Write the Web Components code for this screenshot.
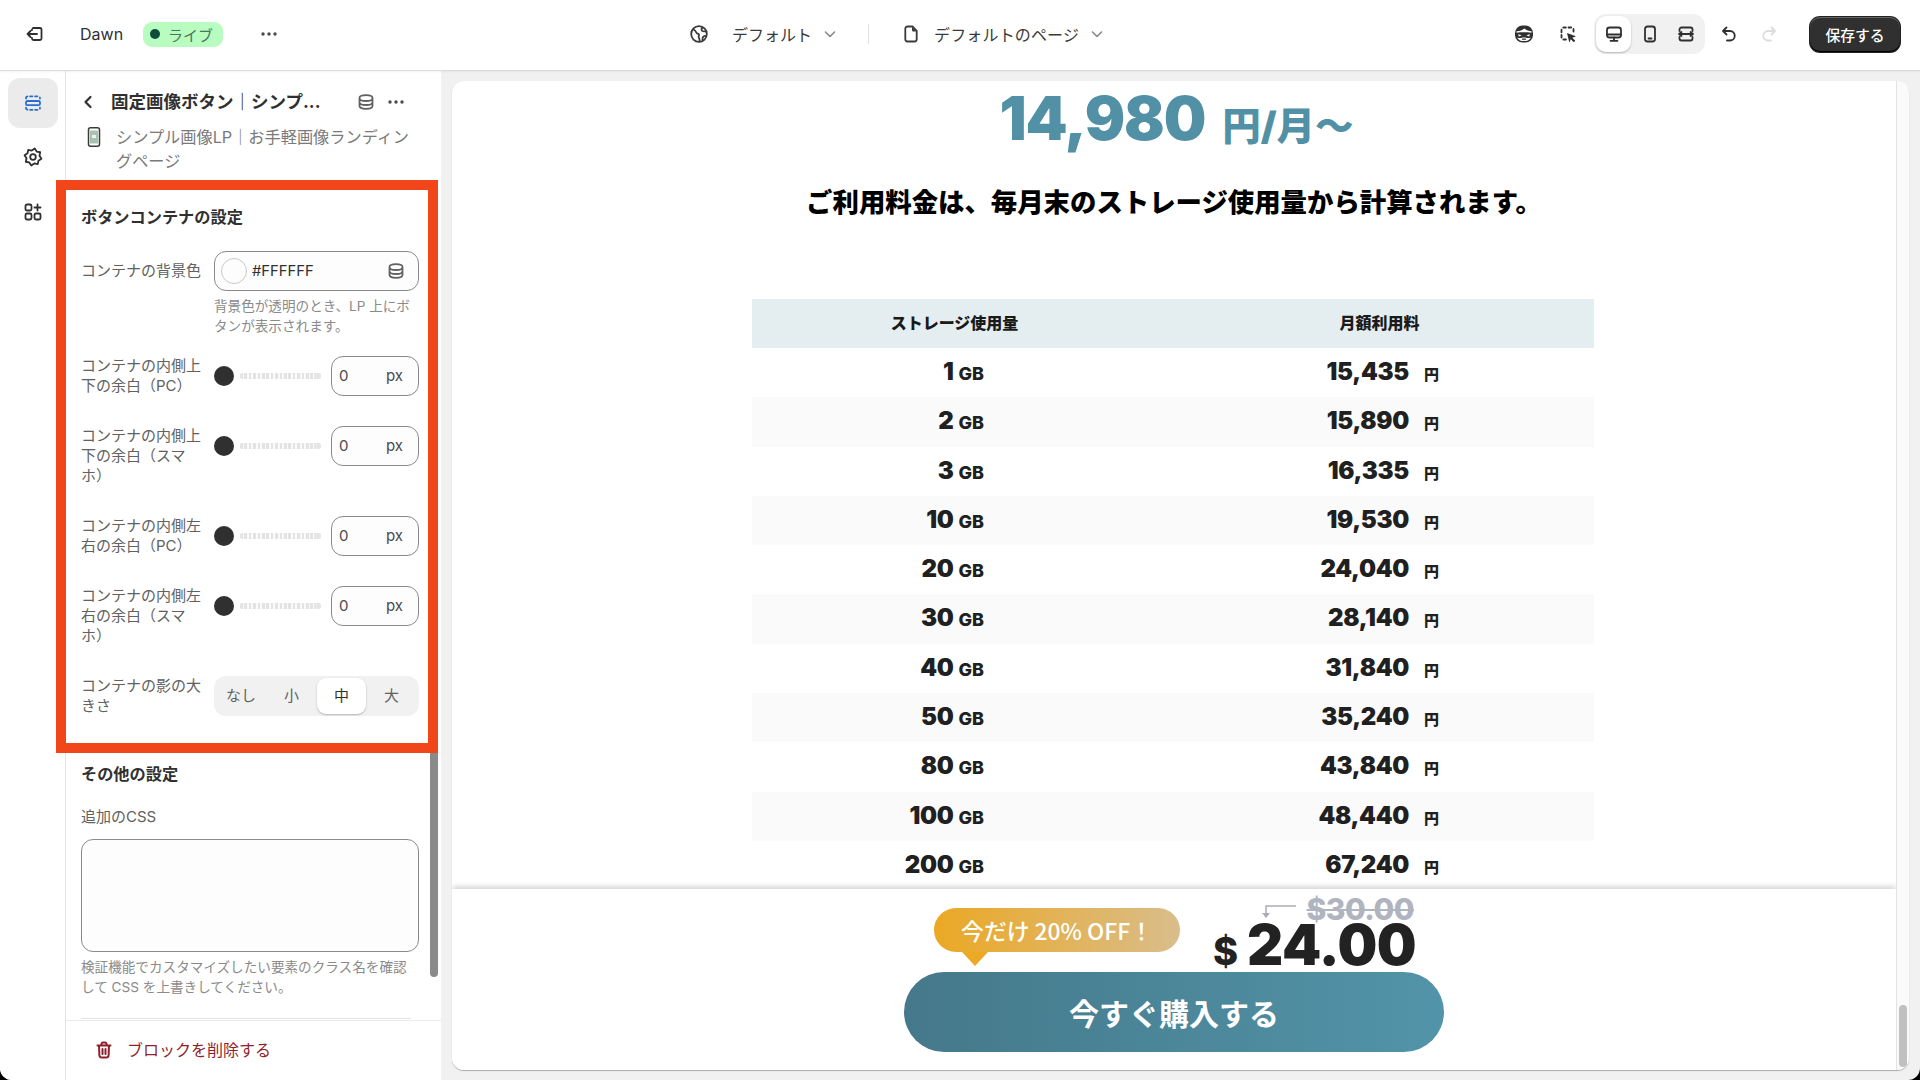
<!DOCTYPE html>
<html lang="ja">
<head>
<meta charset="utf-8">
<title>Dawn</title>
<style>
    html, body { margin: 0; height: 100%; background: #000; }
    body {
        font-family: Inter, "Noto Sans CJK JP", sans-serif;
        color: #303030;
        overflow: hidden;
    }
</style>
</head>
<body>
<editor-app>
    <top-bar slot="top"></top-bar>
    <side-rail slot="rail"></side-rail>
    <settings-panel slot="panel">
        <field-row slot="section">コンテナの内側上下の余白（PC）<slider-input slot="control"></slider-input></field-row>
        <field-row slot="section">コンテナの内側上下の余白（スマホ）<slider-input slot="control"></slider-input></field-row>
        <field-row slot="section">コンテナの内側左右の余白（PC）<slider-input slot="control"></slider-input></field-row>
        <field-row slot="section">コンテナの内側左右の余白（スマホ）<slider-input slot="control"></slider-input></field-row>
        <field-row slot="section">コンテナの影の大きさ<seg-picker slot="control"></seg-picker></field-row>
    </settings-panel>
    <preview-pane slot="main">
        <price-table></price-table>
        <buy-bar slot="bar"></buy-bar>
    </preview-pane>
</editor-app>

<script>
// icons are all on a 20 box, stroke takes currentColor
const line = 'fill="none" stroke="currentColor" stroke-width="1.8" stroke-linecap="round" stroke-linejoin="round"';

function gearPath() {
    let d = "";
    for (let i = 0; i < 16; i++) {
        const r = i % 2 === 0 ? 8.6 : 6.6;
        const a = (i / 16) * Math.PI * 2 + 0.2;
        d += (i === 0 ? "M" : "L") + (10 + r * Math.cos(a)).toFixed(2) + " " + (10 + r * Math.sin(a)).toFixed(2);
    }
    return d + "Z";
}

const ICONS = {
    exit: `<path ${line} d="M8 4h7a1.5 1.5 0 0 1 1.5 1.5v9A1.5 1.5 0 0 1 15 16H8.5a1.5 1.5 0 0 1-1.5-1.5V14M7 6v-.5M12 10H2.5M5.5 7l-3 3 3 3"/>`,
    db: `<path ${line} d="M3.5 6c0-1.6 2.9-2.8 6.5-2.8s6.500 1.200 6.500 2.800v8c0 1.600-2.900 2.800-6.500 2.800s-6.500-1.200-6.500-2.800zM3.500 6.200c0 1.600 2.900 2.800 6.500 2.800s6.500-1.200 6.500-2.800M3.500 10.200c0 1.600 2.900 2.800 6.500 2.800s6.500-1.200 6.500-2.800"/>`,
    globe: `<circle cx="10" cy="10" r="7.800" ${line}/><path ${line} d="M4.500 5.500c1.500.8 2.200 1.600 2.800 3 .5 1.200 2 1 2.600 2 .5.900-.5 1.700-.2 2.700.2.900.9 1.500.9 3.200M13.500 3.500c-1 1-1.200 2.300-.5 3.300.8 1 2.500.5 4.300.7M17 12c-1.200-.3-2.400 0-3 1-.5.900-.6 2-.4 3"/>`,
    page: `<path ${line} d="M11.500 2.500H6.500A2.200 2.200 0 0 0 4.300 4.700v10.600a2.200 2.200 0 0 0 2.200 2.200h7a2.200 2.200 0 0 0 2.200-2.200V6.800z"/><path fill="currentColor" d="M11 3v3.300a1.200 1.200 0 0 0 1.200 1.200h3.300z"/>`,
    chevron: `<path fill="none" stroke="currentColor" stroke-width="1.600" stroke-linecap="round" stroke-linejoin="round" d="M5.500 8l4.500 4.500L14.500 8"/>`,
    back: `<path fill="none" stroke="currentColor" stroke-width="2.200" stroke-linecap="round" stroke-linejoin="round" d="M12.500 5l-5 5 5 5"/>`,
    mask: `<rect x="1" y="1.500" width="18" height="17" rx="7.500" fill="currentColor"/><path fill="#fff" d="M2.500 7.300C6 7.200 8.500 6.300 10.500 4.600 12.500 6.400 14.800 7.200 17.500 7.300V8.700C12.500 8.200 7.500 8.200 2.500 8.700z"/><path fill="#fff" d="M4 10.200l3.800 1.100-2.900 1.200zM16 10.200l-3.800 1.100 2.900 1.200z"/><path fill="#fff" d="M3.200 13.400c2.200.8 3.700 1 5 .2h3.600c1.300.8 2.800.6 5-.2-.8 2.400-3.300 3.600-6.800 3.600s-6-1.200-6.800-3.600z"/><path stroke="currentColor" stroke-width="1.200" stroke-linecap="round" d="M8.500 15.200h3"/>`,
    pick: `<path ${line} stroke-dasharray="2.600 2.700" d="M8 15.500H5.500a2 2 0 0 1-2-2V5.500a2 2 0 0 1 2-2h8a2 2 0 0 1 2 2V8"/><path fill="currentColor" d="M9 9l9 3.300-3.700 1.500 3 3-1.500 1.500-3-3L11.300 18.500z"/>`,
    desktop: `<rect x="3" y="3.500" width="14" height="10" rx="2.500" ${line}/><path ${line} d="M3 10.500h14M10 13.500v3M6.500 16.800h7"/>`,
    mobile: `<rect x="5" y="2.500" width="10" height="15" rx="2.500" ${line}/><path ${line} d="M8.500 14.500h3"/>`,
    full: `<path ${line} d="M3.500 7V5.500a2 2 0 0 1 2-2h9a2 2 0 0 1 2 2V7M3.500 13v1.500a2 2 0 0 0 2 2h9a2 2 0 0 0 2-2V13M3 10h14M5.500 8L3 10l2.500 2M14.500 8l2.500 2-2.500 2"/>`,
    undo: `<path ${line} d="M7.500 3.500L4 7l3.500 3.500M4.500 7h6.500a4.500 4.500 0 0 1 0 9.500H8"/>`,
    redo: `<path ${line} d="M12.500 3.500L16 7l-3.500 3.500M15.500 7H9a4.500 4.500 0 0 0 0 9.500h3"/>`,
    section: `<rect x="3" y="8" width="14" height="4.200" rx="1.500" ${line}/><path ${line} stroke-dasharray="2.400 2.600" d="M3 5.500A2 2 0 0 1 5 3.300h10a2 2 0 0 1 2 2.200M3 14.700a2 2 0 0 0 2 2.100h10a2 2 0 0 0 2-2.100"/>`,
    gear: `<path ${line} d="${gearPath()}"/><circle cx="10" cy="10" r="2.800" ${line}/>`,
    apps: `<rect x="2.500" y="2.500" width="6" height="6" rx="1.500" ${line}/><rect x="2.500" y="11.500" width="6" height="6" rx="1.500" ${line}/><rect x="11.500" y="11.500" width="6" height="6" rx="1.500" ${line}/><path ${line} d="M14.500 2.500v6M11.500 5.500h6"/>`,
    trash: `<path fill="none" stroke="currentColor" stroke-width="2" stroke-linecap="round" stroke-linejoin="round" d="M3.500 5.500h13M7.500 5V3.800A1.500 1.500 0 0 1 9 2.500h2a1.500 1.500 0 0 1 1.500 1.300V5M5 5.500l.4 10a2.200 2.200 0 0 0 2.200 2h4.800a2.200 2.200 0 0 0 2.200-2l.4-10M8.500 9v5M11.500 9v5"/>`,
    phone: `<rect x="4.500" y=".8" width="11" height="18.400" rx="2" fill="none" stroke="#3b3b3b" stroke-width="1.500"/><rect x="6" y="3.500" width="8" height="13" fill="#a8c2b2"/><rect x="8" y="8" width="4" height="3" fill="#eef3ef"/>`,
};

function icon(name, size = 20) {
    return `<svg width="${size}" height="${size}" viewBox="0 0 20 20" style="display:block;flex:none">${ICONS[name]}</svg>`;
}

const DOTS = `<svg width="20" height="20" viewBox="0 0 20 20" style="display:block;flex:none"><circle cx="4" cy="10" r="1.700" fill="currentColor"/><circle cx="10" cy="10" r="1.700" fill="currentColor"/><circle cx="16" cy="10" r="1.700" fill="currentColor"/></svg>`;


class EditorApp extends HTMLElement {
    constructor() {
        super();
        this.attachShadow({ mode: "open" });
        this.shadowRoot.innerHTML = `
            <style>
                :host {
                    display: grid;
                    grid-template-columns: 66px 375px 1fr;
                    grid-template-rows: 71px 1009px;
                    height: 1080px;
                    background: #f1f1f1;
                    border-radius: 0 0 12px 12px;
                    overflow: hidden;
                }
                ::slotted([slot="top"]) { grid-column: 1 / 4; }
                ::slotted([slot="main"]) { min-width: 0; }
            </style>
            <slot name="top"></slot>
            <slot name="rail"></slot>
            <slot name="panel"></slot>
            <slot name="main"></slot>
        `;
    }
}

class TopBar extends HTMLElement {
    constructor() {
        super();
        this.attachShadow({ mode: "open" });
        this.shadowRoot.innerHTML = `
            <style>
                :host {
                    display: flex;
                    justify-content: space-between;
                    align-items: center;
                    height: 71px;
                    box-sizing: border-box;
                    background: #fff;
                    border-bottom: 1px solid #dcdcdc;
                    box-shadow: 0 1px 2px rgba(0,0,0,.06);
                    padding: 0 20px 2px 25px;
                    position: relative;
                    z-index: 3;
                    font-size: 16px;
                    white-space: nowrap;
                }
                .group { display: flex; align-items: center; }
                .center { margin-left: 3px; }
                .dawn { margin-left: 35px; }
                .live {
                    display: flex; align-items: center; gap: 8px;
                    margin-left: 20px; height: 25px; width: 80px; box-sizing: border-box;
                    padding-left: 7px;
                    background: #b8fcc0; border-radius: 9px;
                    color: #47785a; font-size: 15px;
                }
                .live i { width: 10px; height: 10px; border-radius: 50%; background: #0d4d3a; }
                .more { margin-left: 36px; color: #4a4a4a; }
                .pick { display: flex; align-items: center; color: #3a3a3a; }
                .pick span { margin-left: 23px; }
                .pick svg:last-child { color: #8a8a8a; margin-left: 8px; }
                .sep { width: 1px; height: 20px; background: #e3e3e3; margin: 0 32px 0 28px; }
                .page span { margin-left: 13px; letter-spacing: .15px; }
                .ic { color: #303030; }
                .seg {
                    display: flex; align-items: center;
                    height: 40px; margin: 0 14px 0 16px;
                    background: #f1f1f1; border-radius: 12px; padding: 0 2px;
                }
                .seg div { width: 35px; height: 36px; display: grid; place-items: center; }
                .seg .on { background: #fff; border-radius: 10px; box-shadow: 0 1px 2px rgba(0,0,0,.25); }
                .seg div + div { margin-left: 1px; }
                .redo { color: #dcdcdc; margin-left: 20px; }
                .save {
                    margin-left: 31px; width: 90px; height: 35px;
                    display: grid; place-items: center;
                    background: #303030; color: #fff; font-size: 14.800px; font-weight: 500;
                    border-radius: 10px;
                    box-shadow: inset 0 1px 0 rgba(255,255,255,.25), inset 0 -1px 0 #000, 0 0 0 1px #222;
                }
            </style>
            <div class="group">
                ${icon("exit")}
                <span class="dawn">Dawn</span>
                <span class="live"><i></i>ライブ</span>
                <span class="more">${DOTS}</span>
            </div>
            <div class="group center">
                <div class="pick">${icon("globe")}<span>デフォルト</span>${icon("chevron")}</div>
                <div class="sep"></div>
                <div class="pick page">${icon("page")}<span>デフォルトのページ</span>${icon("chevron")}</div>
            </div>
            <div class="group">
                <span class="ic">${icon("mask")}</span>
                <span class="ic" style="margin-left:24px">${icon("pick")}</span>
                <div class="seg">
                    <div class="on">${icon("desktop")}</div>
                    <div>${icon("mobile")}</div>
                    <div>${icon("full")}</div>
                </div>
                <span class="ic">${icon("undo")}</span>
                <span class="redo">${icon("redo")}</span>
                <span class="save">保存する</span>
            </div>
        `;
    }
}

class SideRail extends HTMLElement {
    constructor() {
        super();
        this.attachShadow({ mode: "open" });
        this.shadowRoot.innerHTML = `
            <style>
                :host {
                    display: flex; flex-direction: column; align-items: center;
                    background: #fff;
                    border-right: 1px solid #e3e3e3;
                    padding: 7px 7px 0 8px;
                    box-sizing: border-box;
                    gap: 5px;
                }
                div { width: 50px; height: 50px; display: grid; place-items: center; color: #303030; border-radius: 12px; }
                .on { background: #ebebeb; color: #2c6ecb; }
                .on svg { margin-top: -1px; }
            </style>
            <div class="on">${icon("section")}</div>
            <div style="margin-top:-1px">${icon("gear")}</div>
            <div>${icon("apps")}</div>
        `;
    }
}

class SettingsPanel extends HTMLElement {
    constructor() {
        super();
        this.attachShadow({ mode: "open" });
        this.shadowRoot.innerHTML = `
            <style>
                :host {
                    display: flex; flex-direction: column;
                    background: #fff;
                    position: relative;
                    font-size: 15px;
                    line-height: 20px;
                }
                .head { display: flex; align-items: center; height: 24px; margin-top: 19px; padding-left: 12px; }
                .head b { font-size: 17.500px; font-weight: 700; margin-left: 13px; white-space: nowrap; width: 241px; }
                .head .more { margin-left: 10px; }
                .sub { display: flex; margin-top: 11px; padding-left: 18px; font-size: 16.200px; line-height: 24px; }
                .sub .txt { width: 300px; margin-left: 12px; color: #7a7a7a; }
                .sub svg { margin: 2px 0 0 0; }
                .box {
                    margin: 7px 3px 0 -10px;
                    border: 10px solid #f1451a;
                    padding: 15px 9px 27px 15px;
                    background: #fff;
                    position: relative;
                    z-index: 2;
                }
                h3 { margin: 0; font-size: 16.200px; line-height: 24px; font-weight: 700; color: #303030; }
                .rows { display: flex; flex-direction: column; gap: 30px; }
                .color-row { display: grid; grid-template-columns: 133px 1fr; margin-top: 22px; }
                .color-row label { color: #616161; line-height: 40px; }
                .color {
                    display: flex; align-items: center;
                    height: 40px; box-sizing: border-box;
                    border: 1px solid #8a8a8a; border-radius: 12px; background: #fdfdfd;
                    padding: 0 12px 0 6px;
                    color: #303030;
                }
                .color i { width: 24px; height: 24px; border: 1px solid #c9c9c9; border-radius: 50%; }
                .color span { margin-left: 5px; flex: 1; font-size: 14.800px; }
                .color svg { color: #616161; }
                .hint { color: #8a8a8a; font-size: 13.600px; line-height: 20px; margin: 5px 0 0 133px; width: 205px; }
                .gap { height: 20px; }
                .rest { padding: 9px 0 0 15px; }
                .css-label { color: #616161; margin-top: 21px; }
                .area {
                    margin-top: 12px; width: 338px; height: 113px; box-sizing: border-box;
                    border: 1px solid #8a8a8a; border-radius: 12px; background: #fdfdfd;
                }
                .rest .hint { margin: 5px 0 0; width: 338px; }
                .rule { height: 1px; width: 330px; background: #e3e3e3; margin-top: 21px; }
                .foot {
                    margin-top: 1px; height: 60px;
                    border-top: 1px solid #ebebeb;
                    display: flex; align-items: center;
                    padding-left: 28px;
                    color: #8e1f2b; font-size: 16px;
                }
                .foot span { margin-left: 13px; }
                .bar {
                    position: absolute; left: 364px; top: 610px;
                    width: 8px; height: 296px;
                    background: #8a8a8a; border-radius: 0 0 4px 4px;
                }
            </style>
            <div class="head">
                ${icon("back")}
                <b>固定画像ボタン｜シンプ...</b>
                <span style="color:#616161;margin-left:4px">${icon("db")}</span>
                <span class="more" style="color:#4a4a4a">${DOTS}</span>
            </div>
            <div class="sub">
                ${icon("phone")}
                <div class="txt">シンプル画像LP｜お手軽画像ランディングページ</div>
            </div>
            <section class="box">
                <h3>ボタンコンテナの設定</h3>
                <div class="color-row">
                    <label>コンテナの背景色</label>
                    <div class="color"><i></i><span>#FFFFFF</span>${icon("db")}</div>
                </div>
                <div class="hint">背景色が透明のとき、LP 上にボタンが表示されます。</div>
                <div class="gap"></div>
                <div class="rows"><slot name="section"></slot></div>
            </section>
            <div class="rest">
                <h3>その他の設定</h3>
                <div class="css-label">追加のCSS</div>
                <div class="area"></div>
                <div class="hint">検証機能でカスタマイズしたい要素のクラス名を確認して CSS を上書きしてください。</div>
                <div class="rule"></div>
            </div>
            <div class="foot">${icon("trash")}<span>ブロックを削除する</span></div>
            <div class="bar"></div>
        `;
    }
}

class FieldRow extends HTMLElement {
    constructor() {
        super();
        this.attachShadow({ mode: "open" });
        this.shadowRoot.innerHTML = `
            <style>
                :host { display: grid; grid-template-columns: 124px 1fr; column-gap: 9px; color: #616161; }
            </style>
            <div class="label"><slot></slot></div>
            <slot name="control"></slot>
        `;
    }
}

class SliderInput extends HTMLElement {
    constructor() {
        super();
        this.attachShadow({ mode: "open" });
        this.shadowRoot.innerHTML = `
            <style>
                :host { display: flex; align-items: center; height: 40px; }
                .thumb { width: 20px; height: 20px; border-radius: 50%; background: #303030; flex: none; }
                .track {
                    width: 81px; height: 6px; margin-left: 6px; flex: none;
                    background:
                        linear-gradient(#e6e6e6, #e6e6e6) right / 7px 100% no-repeat,
                        repeating-linear-gradient(90deg, #e3e3e3 0 2.600px, #fafafa 2.600px 4.400px);
                    border-radius: 2px;
                }
                .num {
                    margin-left: 10px; width: 88px; height: 40px; box-sizing: border-box;
                    display: flex; justify-content: space-between; align-items: center;
                    padding: 0 15px 0 7px;
                    border: 1px solid #8a8a8a; border-radius: 12px; background: #fdfdfd;
                    color: #4a4a4a; font-size: 15px;
                }
            </style>
            <div class="thumb"></div>
            <div class="track"></div>
            <div class="num"><span>0</span><span>px</span></div>
        `;
    }
}

class SegPicker extends HTMLElement {
    constructor() {
        super();
        this.attachShadow({ mode: "open" });
        this.shadowRoot.innerHTML = `
            <style>
                :host {
                    display: grid; grid-template-columns: 50px 51px 49px 1fr;
                    align-items: center;
                    height: 40px; padding: 2px; box-sizing: border-box;
                    background: #f1f1f1; border-radius: 12px;
                    font-size: 15px; color: #616161;
                }
                div { height: 36px; display: grid; place-items: center; }
                .on { background: #fff; border-radius: 9px; box-shadow: 0 1px 2px rgba(0,0,0,.25); color: #303030; }
            </style>
            <div>なし</div><div>小</div><div class="on">中</div><div>大</div>
        `;
    }
}

class PreviewPane extends HTMLElement {
    constructor() {
        super();
        this.attachShadow({ mode: "open" });
        this.shadowRoot.innerHTML = `
            <style>
                :host {
                    display: block;
                    margin: 10px 11px;
                    background: #fff;
                    border-radius: 12px;
                    overflow: hidden;
                    box-shadow: 0 1px 1px rgba(0,0,0,.3);
                    height: 989px;
                    position: relative;
                }
                .wrap { display: grid; grid-template-columns: 1fr 13px; height: 100%; }
                .page { position: relative; overflow: hidden; min-width: 0; }
                .track { background: #fafafa; border-left: 1px solid #e3e3e3; position: relative; }
                .thumb {
                    position: absolute; left: 2px; top: 924px;
                    width: 8px; height: 62px; background: #c0c0c0; border-radius: 4px;
                }
            </style>
            <div class="wrap">
                <div class="page">
                    <slot></slot>
                    <slot name="bar"></slot>
                </div>
                <div class="track"><div class="thumb"></div></div>
            </div>
        `;
    }
}

class PriceTable extends HTMLElement {
    constructor() {
        super();
        this.attachShadow({ mode: "open" });
        this.render();
    }

    render() {
        const rows = [
            ["1", "15,435"], ["2", "15,890"], ["3", "16,335"], ["10", "19,530"],
            ["20", "24,040"], ["30", "28,140"], ["40", "31,840"], ["50", "35,240"],
            ["80", "43,840"], ["100", "48,440"], ["200", "67,240"],
        ];
        const rowHtml = rows.map(r => `
            <div class="row">
                <div class="c1"><b>${r[0]}</b><small>GB</small></div>
                <div class="c2"><b>${r[1]}</b><small>円</small></div>
            </div>`).join("");

        this.shadowRoot.innerHTML = `
            <style>
                :host {
                    display: flex; flex-direction: column; align-items: center;
                    font-family: Inter, "Noto Sans CJK JP", sans-serif;
                    color: #202020;
                }
                .price {
                    display: flex; align-items: baseline; justify-content: center;
                    height: 74px; line-height: 74px; color: #5290a6;
                    margin-left: 5px;
                }
                .price b { font-size: 60px; font-weight: 900; letter-spacing: -1.100px; }
                .price span { font-size: 38.500px; margin-left: 17px; font-weight: 900; }
                h2 { margin: 27px 0 0; font-size: 26.400px; line-height: 40px; font-weight: 900; color: #000; }
                .table { width: 842px; margin: 77px 2px 0 0; }
                .head, .row { display: grid; grid-template-columns: 422px 420px; }
                .head {
                    height: 49px; background: #e4edf0; align-items: center;
                    font-size: 16px; font-weight: 900; text-align: center; color: #1a1a1a;
                    padding-bottom: 3px; box-sizing: border-box;
                }
                .head div:first-child { padding-right: 17px; }
                .head div:last-child { padding-right: 9px; }
                .row { height: 49.300px; }
                .row:nth-child(even) { background: #fafafa; }
                .c1, .c2 { display: flex; justify-content: flex-end; align-items: baseline; line-height: 47px; }
                .c1 { padding-right: 190px; }
                .c2 { padding-right: 155px; }
                .row b { font-size: 24px; font-weight: 900; letter-spacing: -.3px; }
                .c1 small { font-size: 18px; font-weight: 800; margin-left: 5px; }
                .c2 small { font-size: 15px; font-weight: 900; margin-left: 15px; }
            </style>
            <div class="price"><b>14,980</b><span>円/月〜</span></div>
            <h2>ご利用料金は、毎月末のストレージ使用量から計算されます。</h2>
            <div class="table">
                <div class="head"><div>ストレージ使用量</div><div>月額利用料</div></div>
                <div class="rows">${rowHtml}</div>
            </div>
        `;
    }
}

class BuyBar extends HTMLElement {
    constructor() {
        super();
        this.attachShadow({ mode: "open" });
        this.shadowRoot.innerHTML = `
            <style>
                :host {
                    display: flex; flex-direction: column; align-items: center;
                    position: absolute; left: 0; right: 0; bottom: 0; height: 181px;
                    box-sizing: border-box;
                    background: #fff;
                    box-shadow: 0 -2px 6px rgba(0,0,0,.2);
                    padding-top: 8px;
                    font-family: Inter, "Noto Sans CJK JP", sans-serif;
                }
                .top { display: flex; align-items: flex-start; width: 480px; height: 75px; }
                .badge {
                    position: relative; flex: none;
                    margin-top: 11px; width: 246px; height: 44px;
                    display: grid; place-items: center;
                    border-radius: 22px;
                    background: linear-gradient(90deg, #eba824, #d9bd8b);
                    color: #fff; font-size: 22.800px; font-weight: 500;
                    font-family: "Noto Sans CJK JP", sans-serif;
                }
                .badge::after {
                    content: ""; position: absolute; left: 28px; top: 44px;
                    border: 13px solid transparent; border-top: 14px solid #eca926; border-bottom: 0;
                }
                .price { margin-left: 35px; width: 199px; flex: none; position: relative; }
                .old {
                    display: flex; justify-content: flex-end; align-items: center;
                    height: 22px; line-height: 22px; margin-top: 1px; color: #b0b4bf; font-size: 30px; font-weight: 800;
                    text-decoration: line-through; text-decoration-thickness: 2px;
                    letter-spacing: -.5px;
                }
                .arrow { position: absolute; left: 46px; top: 6px; }
                .now { display: flex; align-items: baseline; color: #222; font-weight: 900; line-height: 44px; margin-top: 3px; }
                .now span { font-size: 38px; font-weight: 800; margin-left: -2px; }
                .now b { font-size: 56px; font-weight: 900; margin-left: 9px; letter-spacing: -.5px; }
                .buy {
                    width: 540px; height: 80px; margin-top: 0;
                    display: grid; place-items: center;
                    border-radius: 40px;
                    background: linear-gradient(90deg, #45788a, #5294a9);
                    color: #fff; font-size: 30px; font-weight: 700;
                }
            </style>
            <div class="top">
                <div class="badge">今だけ 20% OFF！</div>
                <div class="price">
                    <svg class="arrow" width="36" height="16" viewBox="0 0 36 16">
                        <path d="M35 3H5V12" fill="none" stroke="#aaadb5" stroke-width="1.500"/>
                        <path d="M1 10h8l-4 5z" fill="#aaadb5"/>
                    </svg>
                    <div class="old">$30.00</div>
                    <div class="now"><span>$</span><b>24.00</b></div>
                </div>
            </div>
            <div class="buy">今すぐ購入する</div>
        `;
    }
}

customElements.define("editor-app", EditorApp);
customElements.define("top-bar", TopBar);
customElements.define("side-rail", SideRail);
customElements.define("settings-panel", SettingsPanel);
customElements.define("field-row", FieldRow);
customElements.define("slider-input", SliderInput);
customElements.define("seg-picker", SegPicker);
customElements.define("preview-pane", PreviewPane);
customElements.define("price-table", PriceTable);
customElements.define("buy-bar", BuyBar);
</script>
</body>
</html>
